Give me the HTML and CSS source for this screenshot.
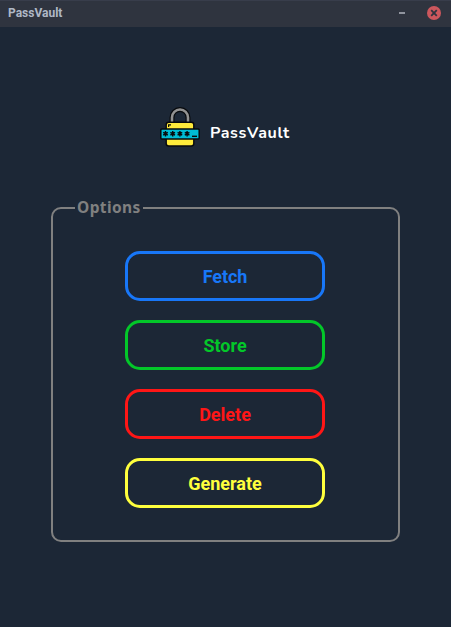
FILE: index.html
```html
<!DOCTYPE html>
<html lang="en">
<head>
<meta charset="utf-8">
<title>PassVault</title>
<link rel="stylesheet" href="styles.css">
</head>
<body>
<div class="window">
  <header class="titlebar">
    <span class="title">PassVault</span>
    <span class="minimize"></span>
    <svg class="close" width="14" height="14" viewBox="0 0 14 14"><circle cx="7" cy="7" r="7" fill="#cc575d"/><path d="M4.2 4.2l5.6 5.6M9.8 4.2l-5.6 5.6" stroke="#2f343f" stroke-width="1.8"/></svg>
  </header>
  <main class="content">
    <div class="brand">
      <svg class="lock" width="40" height="40" viewBox="0 0 40 40">
        <path d="M12 17V10.5a8 8 0 0 1 16 0v6.5" fill="none" stroke="#080a0d" stroke-width="5"/>
        <path d="M12 17V10.5a8 8 0 0 1 16 0v6.5" fill="none" stroke="#929292" stroke-width="2.6"/>
        <rect x="6.2" y="15.2" width="27.6" height="23.8" rx="2.5" fill="#ffeb3b" stroke="#080a0d" stroke-width="1.4"/>
        <path d="M8.6 20v-2.2H11" fill="none" stroke="#080a0d" stroke-width="1.2"/>
        <rect x=".8" y="22" width="38.4" height="10" rx="1" fill="#00bcd4" stroke="#080a0d" stroke-width="1.5"/>
        <g stroke="#080a0d" stroke-width="1.4">
          <path id="star" d="M5.5 24v5.6M3.2 25.4l4.6 2.8M7.8 25.4l-4.6 2.8"/>
          <use href="#star" x="7.2"/><use href="#star" x="14.4"/><use href="#star" x="21.6"/>
          <path d="M32 29.3h5"/>
        </g>
      </svg>
      <h1 class="name">PassVault</h1>
    </div>
    <fieldset class="options">
      <legend>Options</legend>
      <button class="btn fetch">Fetch</button>
      <button class="btn store">Store</button>
      <button class="btn delete">Delete</button>
      <button class="btn generate">Generate</button>
    </fieldset>
  </main>
</div>
</body>
</html>
```
FILE: styles.css
```css
* { box-sizing: border-box; }
body { margin: 0; background: #1c2736; }
.window { height: 627px; overflow: hidden; }
.titlebar {
  display: flex;
  align-items: center;
  height: 27px;
  padding: 0 10px 2px 8px;
  background: #2f343f;
  border-top: 1px solid #383d4b;
  font: 700 12px Roboto, sans-serif;
  color: #afb8c6;
}
.title { flex: 1; }
.minimize { width: 6px; height: 2px; margin-right: 22px; background: #90949e; }
.close { display: block; }
.content { display: flex; flex-direction: column; align-items: center; padding-top: 80px; }
.brand { display: flex; align-items: center; gap: 10px; width: 131px; height: 40px; }
.lock { flex: none; }
.name {
  margin: 11px 0 0;
  font: 700 16px/22px Nunito, "Noto Sans", sans-serif;
  letter-spacing: .65px;
  color: #fff;
}
.options {
  display: flex;
  flex-direction: column;
  align-items: center;
  gap: 19px;
  width: 349px;
  height: 345px;
  margin: 50px 0 0;
  padding: 32px 1px 0 0;
  border: 2px solid #808080;
  border-radius: 10px;
}
.options legend {
  margin-left: 22px;
  padding: 0 2px 2px;
  font: 700 15.5px/20px "Noto Sans", sans-serif;
  letter-spacing: .4px;
  color: #808080;
}
.btn {
  width: 200px;
  height: 50px;
  padding: 2px 0 0;
  border: 3px solid currentColor;
  border-radius: 15px;
  background: transparent;
  font: 700 18px/22px Roboto, sans-serif;
}
.fetch { color: #1877f8; letter-spacing: -.1px; }
.store { color: #03c729; }
.delete { color: #ff1616; }
.generate { color: #ffff3d; }
```
